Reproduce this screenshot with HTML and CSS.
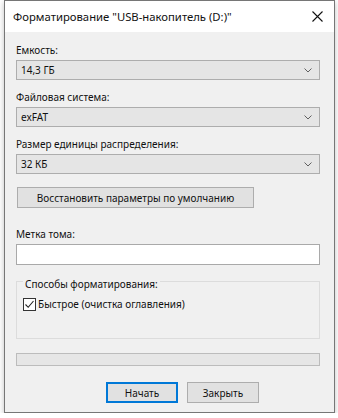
FILE: index.html
```html
<!DOCTYPE html>
<html lang="ru">
<head>
    <meta charset="UTF-8">
    <meta name="viewport" content="width=device-width, initial-scale=1.0">
    <title>Форматирование</title>
    <link rel="stylesheet" href="styles.css">
</head>
<body>
    <div class="window">
        <div class="titlebar">
            <span class="title">Форматирование "USB-накопитель (D:)"</span>
            <svg class="close" width="11" height="11" viewBox="0 0 11 11">
                <path d="M0.5 0.5 L10.5 10.5 M10.5 0.5 L0.5 10.5" stroke="#111" stroke-width="1.1" fill="none"/>
            </svg>
        </div>

        <div class="content">
            <div class="label">Емкость:</div>
            <div class="combo">
                <span>14,3 ГБ</span>
                <svg class="chevron" width="8" height="5" viewBox="0 0 8 5"><path d="M0.5 0.5 L4 4 L7.5 0.5" stroke="#606060" fill="none"/></svg>
            </div>

            <div class="label gap">Файловая система:</div>
            <div class="combo">
                <span>exFAT</span>
                <svg class="chevron" width="8" height="5" viewBox="0 0 8 5"><path d="M0.5 0.5 L4 4 L7.5 0.5" stroke="#606060" fill="none"/></svg>
            </div>

            <div class="label gap">Размер единицы распределения:</div>
            <div class="combo">
                <span>32 КБ</span>
                <svg class="chevron" width="8" height="5" viewBox="0 0 8 5"><path d="M0.5 0.5 L4 4 L7.5 0.5" stroke="#606060" fill="none"/></svg>
            </div>

            <button class="btn btn-reset">Восстановить параметры по умолчанию</button>

            <div class="label label-volume">Метка тома:</div>
            <div class="textbox"></div>

            <fieldset class="group">
                <legend>Способы форматирования:</legend>
                <div class="check">
                    <span class="checkbox">
                        <svg width="11" height="11" viewBox="0 0 11 11"><path d="M1.5 5.5 L4.2 8.3 L9.5 2" stroke="#222" stroke-width="1.1" fill="none"/></svg>
                    </span>
                    Быстрое (очистка оглавления)
                </div>
            </fieldset>

            <div class="progress"></div>

            <div class="actions">
                <button class="btn btn-default">Начать</button>
                <button class="btn">Закрыть</button>
            </div>
        </div>
    </div>
</body>
</html>
```

FILE: styles.css
```css
* {
    margin: 0;
    padding: 0;
    box-sizing: border-box;
}

body {
    font-family: 'Noto Sans', 'Liberation Sans', sans-serif;
    font-size: 10px;
    color: #111;
    background: #ffffff;
}

.window {
    margin-left: 4px;
    width: 331px;
    height: 413px;
    border: 1px solid #767676;
    background-color: #f0f0f0;
    box-shadow: 0 2px 6px rgba(0,0,0,0.25);
    display: flex;
    flex-direction: column;
}

/* title bar */
.titlebar {
    height: 31px;
    background-color: #ffffff;
    display: flex;
    align-items: center;
    justify-content: space-between;
    padding: 0 11px 0 8px;
}

.title {
    font-size: 11.3px;
    line-height: 16px;
    margin-top: 1px;
}

.close {
    display: block;
}

/* dialog body */
.content {
    padding: 10px 14px 0 11px;
    display: flex;
    flex-direction: column;
    align-items: flex-start;
}

.label {
    line-height: 16px;
    height: 16px;
    margin-bottom: 2px;
}

.label.gap {
    margin-top: 9px;
}

.label-volume {
    margin-top: 18px;
}

.combo {
    width: 304px;
    height: 20px;
    border: 1px solid #adadad;
    background-color: #e5e5e5;
    display: flex;
    align-items: center;
    justify-content: space-between;
    padding: 0 7px 0 4px;
}

.chevron {
    display: block;
}

.btn {
    font-family: inherit;
    font-size: 10px;
    color: #111;
    height: 21px;
    border: 1px solid #adadad;
    background-color: #e1e1e1;
}

.btn-reset {
    margin-top: 13px;
    margin-left: 1px;
    width: 237px;
}

.textbox {
    width: 304px;
    height: 21px;
    border: 1px solid #a9a9a9;
    background-color: #ffffff;
}

/* group box */
.group {
    margin-top: 7px;
    width: 304px;
    border: 1px solid #dcdcdc;
    padding: 6px 6px 26px 6px;
}

.group legend {
    padding: 6px 2px 0 2px;
    line-height: 12px;
}

.check {
    display: flex;
    align-items: center;
    height: 16px;
    gap: 2px;
}

.checkbox {
    width: 13px;
    height: 13px;
    border: 1px solid #333;
    background-color: #ffffff;
    display: flex;
    align-items: center;
    justify-content: center;
}

.checkbox svg {
    display: block;
}

.progress {
    margin-top: 14px;
    width: 304px;
    height: 13px;
    border: 1px solid #bcbcbc;
    background-color: #e6e6e6;
}

.actions {
    margin-top: 16px;
    margin-left: 90px;
    display: flex;
    gap: 9px;
}

.actions .btn {
    width: 72px;
}

.btn-default {
    border: 2px solid #0078d7;
}
```
